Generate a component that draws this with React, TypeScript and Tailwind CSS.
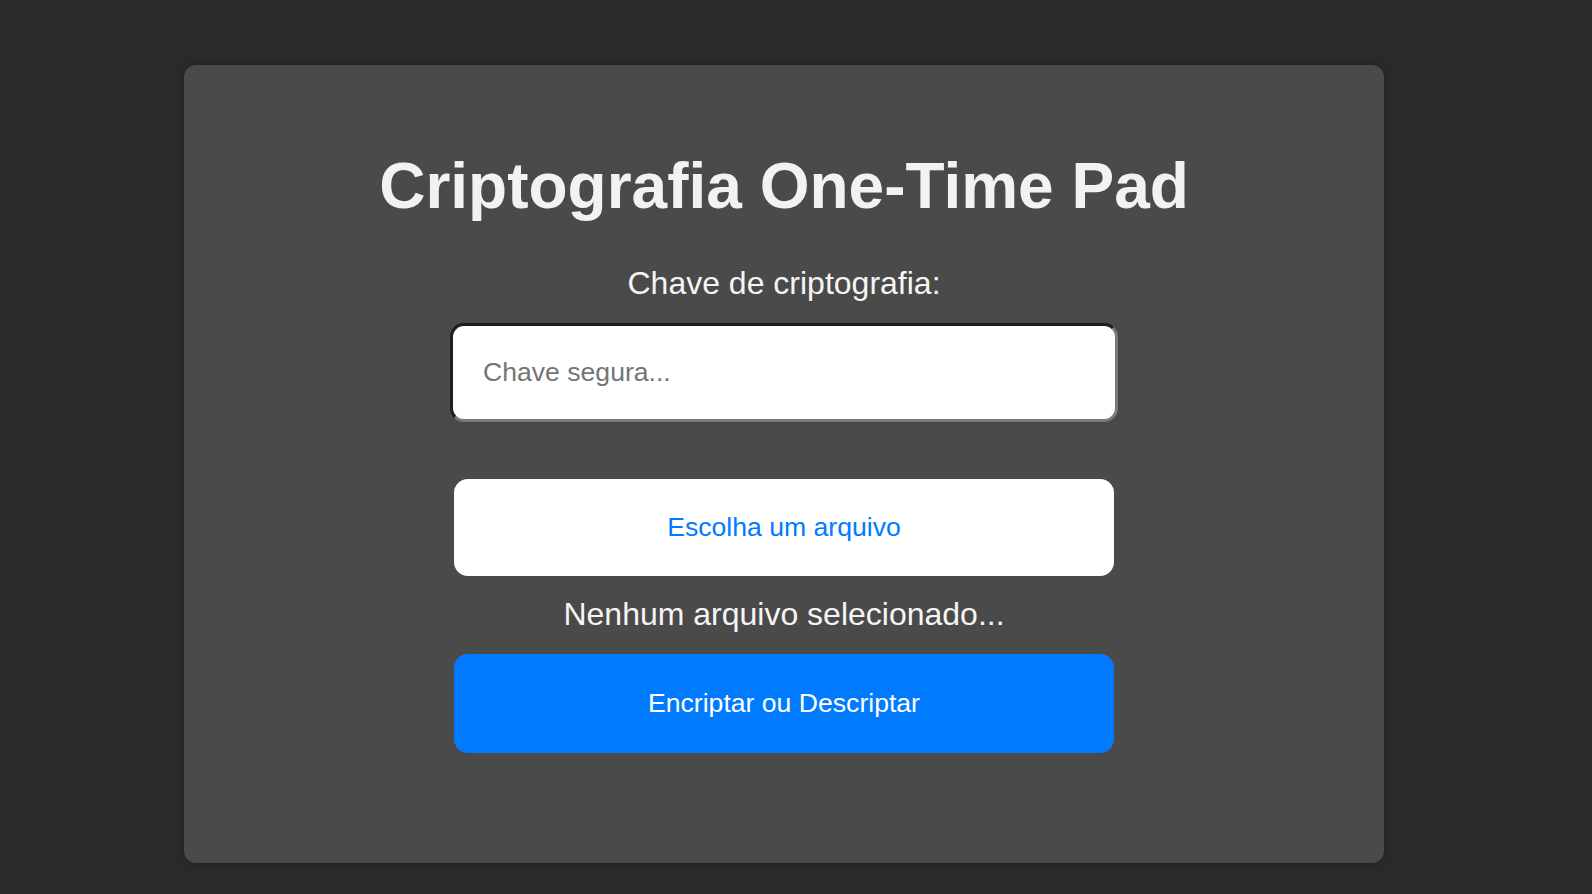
import React from "react";

export default function App() {
  return (
    <div
      className="min-h-screen w-full bg-[#2b2b2b] pt-[65px] pl-[184px] pb-[30px]"
      style={{ fontFamily: '"Liberation Sans", Arial, Helvetica, sans-serif' }}
    >
      <div className="w-[1200px] h-[798px] bg-[#4a4a4a] rounded-[12px] shadow-[0_0_12px_rgba(0,0,0,0.25)] flex flex-col items-center">
        <h1 className="mt-[84px] text-[64px] leading-[normal] font-bold text-[#f2f2f2]">
          Criptografia One-Time Pad
        </h1>
        <label className="mt-[42px] text-[32px] leading-[normal] text-[#f5f5f5]">
          Chave de criptografia:
        </label>
        <input
          type="text"
          placeholder="Chave segura..."
          className="mt-[21px] w-[668px] h-[99px] rounded-[14px] bg-white px-[30px] text-[26.6px] text-[#222] placeholder:text-[#757575] outline-none border-[3px] border-t-[#1e1e1e] border-l-[#1e1e1e] border-b-[#7a7a7a] border-r-[#7a7a7a]"
        />
        <button className="mt-[57px] w-[660px] h-[97px] rounded-[14px] bg-white text-[26.6px] leading-[normal] text-[#007bff] flex items-center justify-center">
          Escolha um arquivo
        </button>
        <p className="mt-[20px] text-[32px] leading-[normal] text-[#f5f5f5]">
          Nenhum arquivo selecionado...
        </p>
        <button className="mt-[21px] w-[660px] h-[99px] rounded-[14px] bg-[#007bff] text-[26.6px] leading-[normal] text-white flex items-center justify-center">
          Encriptar ou Descriptar
        </button>
      </div>
    </div>
  );
}
